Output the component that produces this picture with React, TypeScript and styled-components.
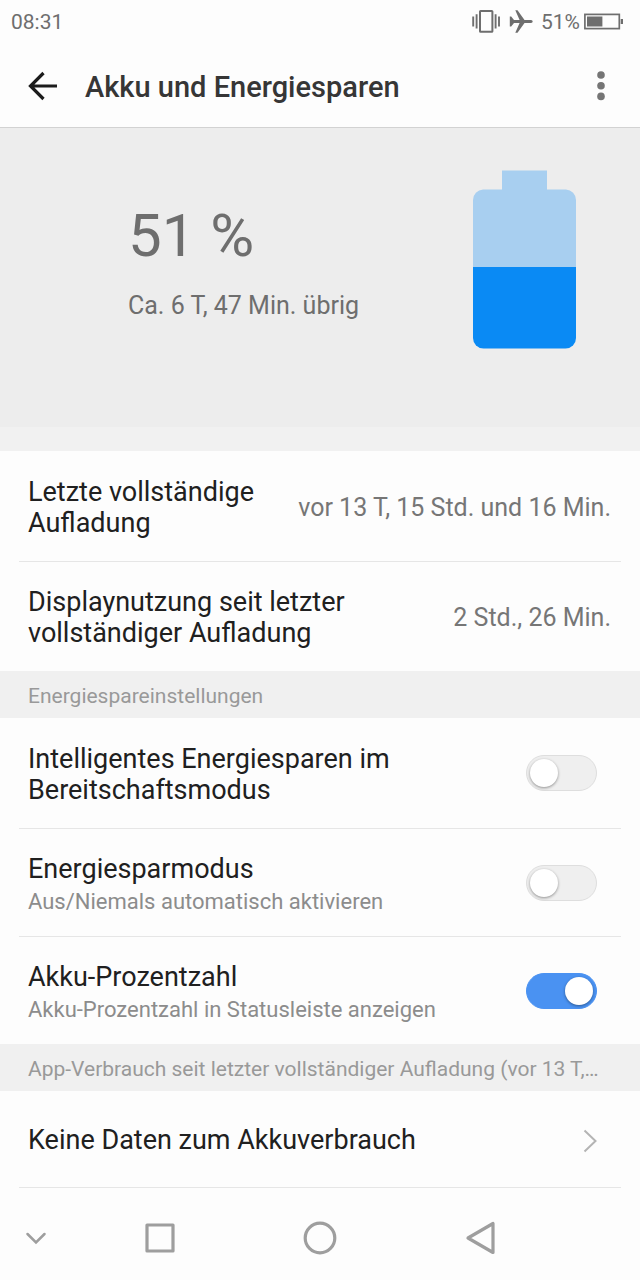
import React from "react";
import styled, { createGlobalStyle } from "styled-components";

const GlobalStyle = createGlobalStyle`
  *, *::before, *::after { box-sizing: border-box; }
  body {
    margin: 0;
    background: #fdfdfd;
    font-family: Roboto, "Liberation Sans", sans-serif;
    color: #202020;
  }
`;

const Screen = styled.div`
  display: flex;
  flex-direction: column;
  min-height: 100vh;
`;

const StatusBar = styled.div`
  display: flex;
  align-items: center;
  justify-content: space-between;
  height: 44px;
  padding: 0 16px 0 11px;
  font-size: 21px;
  line-height: 28px;
  color: #6e6e6e;
`;

const StatusIcons = styled.div`
  display: flex;
  align-items: center;

  svg { display: block; }
`;

const StatusPercent = styled.span`
  margin: 0 4px 0 8px;
`;

const PlaneSlot = styled.span`
  margin-left: 9px;
`;

const AppBar = styled.header`
  display: flex;
  align-items: center;
  height: 84px;
  padding: 0 25px;
  border-bottom: 1px solid #d2d2d2;
`;

const IconButton = styled.button`
  display: flex;
  align-items: center;
  justify-content: center;
  padding: 0;
  border: 0;
  background: none;
  color: inherit;
  cursor: pointer;

  svg { display: block; }
`;

const PageTitle = styled.h1`
  flex: 1;
  margin: 0 0 0 25px;
  padding-top: 2px;
  font-size: 29px;
  line-height: 36px;
  font-weight: 500;
  color: #363636;
`;

const Summary = styled.section`
  display: flex;
  justify-content: space-between;
  align-items: flex-start;
  height: 299px;
  padding: 42px 63px 0 128px;
  background: #ededed;
  color: #6e6e6e;
`;

const Level = styled.div`
  margin-top: 30px;
  font-size: 60px;
  line-height: 72px;
`;

const Remaining = styled.div`
  margin-top: 19px;
  font-size: 25px;
  line-height: 30px;
`;

const Spacer = styled.div`
  height: 24px;
  background: #f1f1f1;
`;

const Rows = styled.div`
  padding: 0 19px;
`;

const Row = styled.div<{ $height: number }>`
  display: flex;
  align-items: center;
  justify-content: space-between;
  min-height: ${(p) => p.$height}px;
  padding: 3px 10px 0 9px;

  & + & { border-top: 1px solid #e6e6e6; }
`;

const SwitchRow = styled(Row)`
  padding-top: 0;
  padding-right: 24px;
`;

const RowText = styled.div`
  display: flex;
  flex-direction: column;
  gap: 4px;
  padding-top: 4px;
`;

const RowTitle = styled.label<{ $width?: number }>`
  max-width: ${(p) => (p.$width ? `${p.$width}px` : "none")};
  font-size: 27px;
  line-height: 31px;
  color: #202020;
`;

const RowNote = styled.span`
  font-size: 22px;
  line-height: 26px;
  color: #8c8c8c;
`;

const RowValue = styled.span`
  font-size: 25px;
  line-height: 30px;
  color: #767676;
  white-space: nowrap;
`;

const SectionTitle = styled.h2`
  margin: 0;
  padding: 3px 28px 0;
  background: #f0f0f0;
  font-size: 21px;
  line-height: 44px;
  font-weight: 400;
  color: #999;
  white-space: nowrap;
  overflow: hidden;
  text-overflow: ellipsis;
`;

const Switch = styled.input`
  appearance: none;
  flex: none;
  display: flex;
  align-items: center;
  width: 71px;
  height: 36px;
  margin: 0;
  padding: 0 3px;
  border: 1px solid #dedede;
  border-radius: 18px;
  background: #efefef;
  cursor: pointer;

  &::before {
    content: "";
    width: 28px;
    height: 28px;
    border-radius: 50%;
    background: #fff;
    box-shadow: 0 1px 3px rgba(0, 0, 0, 0.4);
  }

  &:checked {
    justify-content: flex-end;
    border-color: #4a92f2;
    background: #4a92f2;
  }
`;

const LinkRow = styled.a`
  display: flex;
  align-items: center;
  justify-content: space-between;
  height: 97px;
  padding: 3px 24px 0 9px;
  border-bottom: 1px solid #e6e6e6;
  font-size: 27px;
  line-height: 31px;
  color: #202020;
  text-decoration: none;

  svg { display: block; }
`;

const NavBar = styled.nav`
  display: grid;
  grid-template-columns: 72fr 176fr 144fr 176fr 72fr;
  align-items: center;
  height: 84px;
  margin-top: auto;
  color: #9e9e9e;
`;

const VibrateIcon = () => (
  <svg width="28" height="24" viewBox="0 0 28 24" fill="none" stroke="currentColor" aria-hidden="true">
    <rect x="8" y="1" width="12.4" height="20.8" rx="0.6" strokeWidth="2" />
    <path d="M1.2 6.400v10M27 6.400v10M4.600 4.200v14.400M23.600 4.200v14.400" strokeWidth="1.900" />
  </svg>
);

const PlaneIcon = () => (
  <svg width="24" height="24" viewBox="0 0 24 24" fill="currentColor" aria-hidden="true">
    <path d="M0.800 6.500h1.400L5 10H10.600L6.300 0.300H8.500L15.500 10H22C24.200 10.100 24.200 12.900 22 13H15.500L8.500 22.700H6.300L10.600 13H5L2.200 16.500H0.800Z" />
  </svg>
);

const SmallBatteryIcon = () => (
  <svg width="40" height="18" viewBox="0 0 40 18" aria-hidden="true">
    <rect x="0.900" y="1.400" width="34.400" height="14.200" fill="none" stroke="currentColor" strokeWidth="1.700" />
    <rect x="3" y="3.500" width="15.400" height="10" fill="currentColor" />
    <rect x="36.700" y="6" width="2.300" height="5" fill="currentColor" />
  </svg>
);

const BatteryArt = () => (
  <svg width="104" height="179" viewBox="0 0 104 179" role="img" aria-label="Akkustand 51 %">
    <path d="M29 .6h45V19.500H93a10.500 10.500 0 0 1 10 10.500V97H0V30a10.500 10.500 0 0 1 10-10.500H29Z" fill="#a8cff0" />
    <path d="M0 97h103v71a10.500 10.500 0 0 1-10.500 10.500h-82A10.500 10.500 0 0 1 0 168Z" fill="#0a8af4" />
  </svg>
);

const switches = [
  { id: "smart", title: "Intelligentes Energiesparen im Bereitschaftsmodus", width: 400, height: 110, on: false },
  { id: "saver", title: "Energiesparmodus", note: "Aus/Niemals automatisch aktivieren", height: 108, on: false },
  { id: "percent", title: "Akku-Prozentzahl", note: "Akku-Prozentzahl in Statusleiste anzeigen", height: 108, on: true },
];

export default function App() {
  return (
    <Screen>
      <GlobalStyle />
      <StatusBar>
        <span>08:31</span>
        <StatusIcons>
          <VibrateIcon />
          <PlaneSlot>
            <PlaneIcon />
          </PlaneSlot>
          <StatusPercent>51%</StatusPercent>
          <SmallBatteryIcon />
        </StatusIcons>
      </StatusBar>
      <AppBar>
        <IconButton aria-label="Zurück">
          <svg width="35" height="36" viewBox="0 0 35 36" fill="none" stroke="#1c1c1c" strokeWidth="3.200" aria-hidden="true">
            <path d="M32 18H6M18.500 5L5.500 18L18.500 31" />
          </svg>
        </IconButton>
        <PageTitle>Akku und Energiesparen</PageTitle>
        <IconButton aria-label="Weitere Optionen">
          <svg width="28" height="36" viewBox="0 0 28 36" fill="#757575" aria-hidden="true">
            <circle cx="14" cy="7" r="3.800" />
            <circle cx="14" cy="17.700" r="3.800" />
            <circle cx="14" cy="28.400" r="3.800" />
          </svg>
        </IconButton>
      </AppBar>
      <main>
        <Summary>
          <div>
            <Level>51 %</Level>
            <Remaining>Ca. 6 T, 47 Min. übrig</Remaining>
          </div>
          <BatteryArt />
        </Summary>
        <Spacer />
        <Rows>
          <Row $height={110}>
            <RowTitle as="span" $width={260}>Letzte vollständige Aufladung</RowTitle>
            <RowValue>vor 13 T, 15 Std. und 16 Min.</RowValue>
          </Row>
          <Row $height={110}>
            <RowTitle as="span" $width={400}>Displaynutzung seit letzter vollständiger Aufladung</RowTitle>
            <RowValue>2 Std., 26 Min.</RowValue>
          </Row>
        </Rows>
        <SectionTitle>Energiespareinstellungen</SectionTitle>
        <Rows>
          {switches.map((s) => (
            <SwitchRow key={s.id} $height={s.height}>
              <RowText>
                <RowTitle htmlFor={s.id} $width={s.width}>{s.title}</RowTitle>
                {s.note && <RowNote>{s.note}</RowNote>}
              </RowText>
              <Switch type="checkbox" role="switch" id={s.id} defaultChecked={s.on} />
            </SwitchRow>
          ))}
        </Rows>
        <SectionTitle>App-Verbrauch seit letzter vollständiger Aufladung (vor 13 T,…</SectionTitle>
        <Rows>
          <LinkRow href="#verbrauch">
            Keine Daten zum Akkuverbrauch
            <svg width="14" height="24" viewBox="0 0 14 24" fill="none" stroke="#b4b4b4" strokeWidth="2" aria-hidden="true">
              <path d="M1.500 1.500L12.500 12L1.500 22.500" />
            </svg>
          </LinkRow>
        </Rows>
      </main>
      <NavBar aria-label="Systemnavigation">
        <IconButton aria-label="Leiste ausblenden">
          <svg width="24" height="36" viewBox="0 0 24 36" fill="none" stroke="currentColor" strokeWidth="2.500" strokeLinecap="round" aria-hidden="true">
            <path d="M3.500 14L12 22.500L20.500 14" />
          </svg>
        </IconButton>
        <IconButton aria-label="Letzte Apps">
          <svg width="36" height="36" viewBox="0 0 36 36" fill="none" stroke="currentColor" strokeWidth="3.200" strokeLinejoin="round" aria-hidden="true">
            <rect x="5" y="5" width="26" height="26" />
          </svg>
        </IconButton>
        <IconButton aria-label="Startseite">
          <svg width="36" height="36" viewBox="0 0 36 36" fill="none" stroke="currentColor" strokeWidth="3.200" aria-hidden="true">
            <circle cx="18" cy="18" r="14.800" />
          </svg>
        </IconButton>
        <IconButton aria-label="Zurück">
          <svg width="36" height="36" viewBox="0 0 36 36" fill="none" stroke="currentColor" strokeWidth="3.200" strokeLinejoin="round" aria-hidden="true">
            <path d="M31 3.500V32.500L6 18Z" />
          </svg>
        </IconButton>
      </NavBar>
    </Screen>
  );
}
